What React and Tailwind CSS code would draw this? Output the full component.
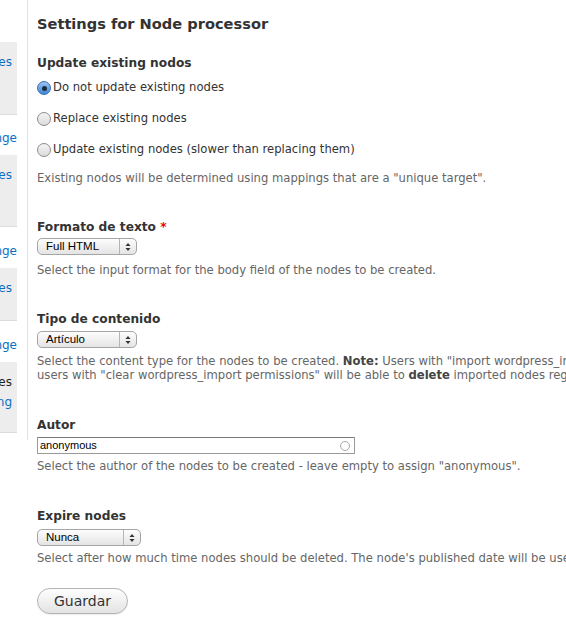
import React from "react";

const Radio = ({ checked, label }) => (
  <label className="flex items-center h-[18px] text-[11.6px] text-[#333]">
    {checked ? (
      <span className="w-[14px] h-[14px] rounded-full border border-[#3a6fb0] bg-gradient-to-b from-[#9cc3f0] to-[#3d85d8] flex items-center justify-center shrink-0">
        <span className="w-[5px] h-[5px] rounded-full bg-[#1d2a3a]" />
      </span>
    ) : (
      <span className="w-[14px] h-[14px] rounded-full border border-[#8c8c8c] bg-gradient-to-b from-[#f4f4f4] to-[#dcdcdc] shrink-0" />
    )}
    <span className="ml-[2px]">{label}</span>
  </label>
);

const Select = ({ value, width }) => (
  <div
    className={`${width} h-[17px] rounded-[5px] border border-[#a5a5a5] bg-gradient-to-b from-[#fdfdfd] to-[#e4e4e4] flex items-center font-['Liberation_Sans'] text-[11.5px] text-black`}
  >
    <span className="flex-1 pl-[8px] leading-none">{value}</span>
    <span className="w-[17px] h-full border-l border-[#b5b5b5] flex items-center justify-center">
      <svg width="6" height="10" viewBox="0 0 6 10">
        <path d="M3 1 L5.5 4 L0.5 4 Z" fill="#333" />
        <path d="M3 9 L5.5 6 L0.5 6 Z" fill="#333" />
      </svg>
    </span>
  </div>
);

const Label = ({ children, className = "" }) => (
  <div className={`text-[12.2px] font-bold leading-[18px] text-[#333] ${className}`}>
    {children}
  </div>
);

const Desc = ({ children, className = "" }) => (
  <div className={`text-[11.6px] leading-[14px] text-[#666] whitespace-nowrap ${className}`}>
    {children}
  </div>
);

const SideBox = ({ height, text, dark, extra }) => (
  <div
    className="bg-[#ededed] border-b border-[#dcdcdc] w-[17px] overflow-hidden flex flex-col items-end pt-[13px] pr-[5px]"
    style={{ height }}
  >
    <span className={`text-[12px] leading-[14px] whitespace-nowrap ${dark ? "text-[#222]" : "text-[#0a6fc2]"}`}>
      {text}
    </span>
    {extra && (
      <span className="text-[12px] leading-[14px] mt-[6px] whitespace-nowrap text-[#0a6fc2]">
        {extra}
      </span>
    )}
  </div>
);

const SideLink = ({ height }) => (
  <div className="w-[17px] overflow-hidden flex items-center justify-end pt-[6px]" style={{ height }}>
    <span className="text-[12px] text-[#0a6fc2] whitespace-nowrap">Change</span>
  </div>
);

export default function App() {
  return (
    <div className="w-[566px] h-[632px] overflow-hidden bg-white flex font-['DejaVu_Sans',sans-serif]">
      <aside className="w-[28px] h-[440px] shrink-0 border-r border-[#e2e2e2] pt-[42px]">
        <SideBox height={73} text="Types" />
        <SideLink height={40} />
        <SideBox height={72} text="Types" />
        <SideLink height={41} />
        <SideBox height={53} text="Types" />
        <SideLink height={41} />
        <SideBox height={71} text="Types" dark extra="Setting" />
      </aside>

      <main className="pl-[9px] pt-[14px] flex-1 min-w-0">
        <h1 className="text-[14.6px] font-bold leading-[20px] text-[#333]">
          Settings for Node processor
        </h1>

        <Label className="mt-[20px]">Update existing nodos</Label>
        <div className="mt-[7px] flex flex-col gap-[13px]">
          <Radio checked label="Do not update existing nodes" />
          <Radio label="Replace existing nodes" />
          <Radio label="Update existing nodes (slower than replacing them)" />
        </div>
        <Desc className="mt-[12px]">
          Existing nodos will be determined using mappings that are a "unique target".
        </Desc>

        <Label className="mt-[33px]">
          Formato de texto <span className="text-[#e00]">*</span>
        </Label>
        <div className="mt-[2px]">
          <Select value="Full HTML" width="w-[100px]" />
        </div>
        <Desc className="mt-[8px]">
          Select the input format for the body field of the nodes to be created.
        </Desc>

        <Label className="mt-[33px]">Tipo de contenido</Label>
        <div className="mt-[3px]">
          <Select value="Artículo" width="w-[100px]" />
        </div>
        <Desc className="mt-[6px]">
          Select the content type for the nodes to be created. <b className="text-[#444]">Note:</b> Users with "import wordpress_import" permissions will be able to import nodes
        </Desc>
        <Desc>
          users with "clear wordpress_import permissions" will be able to <b className="text-[#444]">delete</b> imported nodes regardless of their permissions.
        </Desc>

        <Label className="mt-[34px]">Autor</Label>
        <div className="mt-[3px] w-[318px] h-[17px] border border-[#9a9a9a] border-t-[#7a7a7a] flex items-center">
          <span className="flex-1 pl-[2px] font-['Liberation_Sans'] text-[11px] text-black leading-none">
            anonymous
          </span>
          <span className="w-[10px] h-[10px] rounded-full border-[1.5px] border-[#a8a8a8] mr-[4px]" />
        </div>
        <Desc className="mt-[5px]">
          Select the author of the nodes to be created - leave empty to assign "anonymous".
        </Desc>

        <Label className="mt-[34px]">Expire nodes</Label>
        <div className="mt-[4px]">
          <Select value="Nunca" width="w-[104px]" />
        </div>
        <Desc className="mt-[5px]">
          Select after how much time nodes should be deleted. The node's published date will be used for determining the node's age.
        </Desc>

        <button className="mt-[23px] w-[91px] h-[26px] rounded-full border border-[#b4b4b4] bg-gradient-to-b from-[#fefefe] to-[#e3e3e3] text-[14px] text-[#333] shadow-[0_1px_1px_rgba(0,0,0,0.08)]">
          Guardar
        </button>
      </main>
    </div>
  );
}
